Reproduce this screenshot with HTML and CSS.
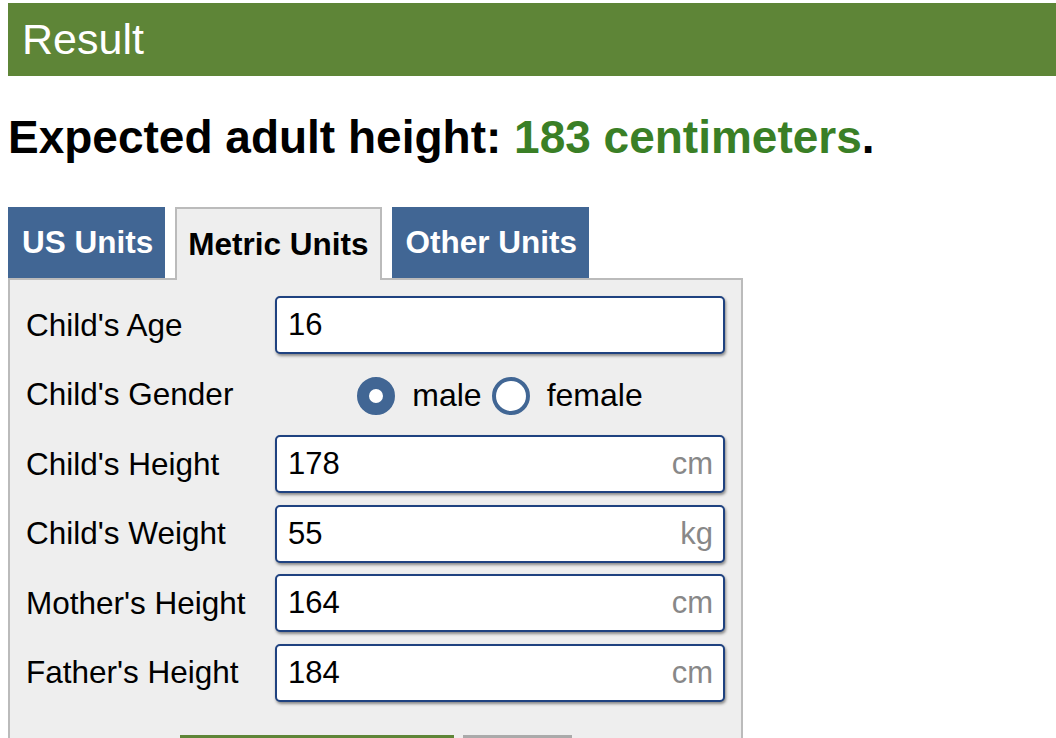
FILE: index.html
```html
<!DOCTYPE html>
<html>
  <head>
    <title>Height Calculator</title>
    <link rel="stylesheet" href="styles.css">
  </head>
  <body>
    <h2 class="result-bar">Result</h2>

    <p class="answer">
      Expected adult height: <span class="answer-value">183 centimeters</span>.
    </p>

    <div class="tabs">
      <a class="tab">US Units</a>
      <a class="tab tab-active">Metric Units</a>
      <a class="tab">Other Units</a>
    </div>

    <div class="panel">
      <form class="calc-form">
        <label class="row-label" for="age">Child's Age</label>
        <div class="field">
          <input type="text" id="age" value="16" />
        </div>

        <span class="row-label">Child's Gender</span>
        <div class="gender">
          <span class="radio radio-checked"></span>
          <span class="radio-text">male</span>
          <span class="radio"></span>
          <span class="radio-text">female</span>
        </div>

        <label class="row-label" for="height">Child's Height</label>
        <div class="field">
          <input type="text" id="height" value="178" />
          <span class="unit">cm</span>
        </div>

        <label class="row-label" for="weight">Child's Weight</label>
        <div class="field">
          <input type="text" id="weight" value="55" />
          <span class="unit">kg</span>
        </div>

        <label class="row-label" for="mheight">Mother's Height</label>
        <div class="field">
          <input type="text" id="mheight" value="164" />
          <span class="unit">cm</span>
        </div>

        <label class="row-label" for="fheight">Father's Height</label>
        <div class="field">
          <input type="text" id="fheight" value="184" />
          <span class="unit">cm</span>
        </div>
      </form>

      <div class="buttons">
        <button type="button" class="btn-calc">Calculate</button>
        <button type="button" class="btn-clear">Clear</button>
      </div>
    </div>
  </body>
</html>
```

FILE: styles.css
```css
body {
  font-family: "Liberation Sans", Arial, sans-serif;
  margin: 0;
  padding: 3px 0 0 8px;
  color: #000;
  background: #fff;
  overflow: hidden;
}

.result-bar {
  margin: 0;
  height: 73px;
  padding-left: 14px;
  background-color: #5e8537;
  color: #fff;
  font-size: 43px;
  font-weight: normal;
  line-height: 73px;
}

.answer {
  margin: 33px 0 42px 0;
  font-size: 46px;
  font-weight: bold;
  line-height: 56px;
}

.answer-value {
  color: #3a7f26;
}

.tabs {
  display: flex;
  gap: 10px;
  align-items: flex-end;
  width: 735px;
  position: relative;
  z-index: 1;
}

.tab {
  height: 71px;
  padding: 0 12px 0 14px;
  background-color: #416694;
  color: #fff;
  font-size: 31.5px;
  font-weight: bold;
  line-height: 71px;
  box-sizing: border-box;
}

.tab-active {
  height: 73px;
  margin-bottom: -2px;
  padding: 0 11px;
  background-color: #eee;
  color: #000;
  border: 2px solid #bbb;
  border-bottom: none;
  line-height: 71px;
}

.panel {
  width: 735px;
  box-sizing: border-box;
  background-color: #eee;
  border: 2px solid #bbb;
  padding: 16px 16px 40px 16px;
}

.calc-form {
  display: grid;
  grid-template-columns: 249px 450px;
  grid-auto-rows: 58px;
  row-gap: 11.5px;
  align-items: center;
}

.row-label {
  font-size: 31.5px;
}

.field {
  position: relative;
  height: 58px;
}

.field input {
  width: 100%;
  height: 58px;
  box-sizing: border-box;
  padding: 0 11px;
  border: 2px solid #1f4280;
  border-radius: 5px;
  box-shadow: 1px 2px 3px #888;
  font-family: "Liberation Sans", Arial, sans-serif;
  font-size: 31px;
  color: #000;
  background: #fff;
}

.unit {
  position: absolute;
  right: 12px;
  top: 0;
  line-height: 58px;
  font-size: 31px;
  color: #888;
}

.gender {
  display: flex;
  align-items: center;
  justify-content: center;
  font-size: 32px;
  padding-top: 2px;
}

.radio {
  width: 38px;
  height: 38px;
  box-sizing: border-box;
  border-radius: 50%;
  border: 4px solid #416694;
  background: #fff;
  margin-right: 17px;
}

.radio-checked {
  border: 12px solid #416694;
}

.radio-text {
  margin-right: 10px;
}

.radio-text:last-child {
  margin-right: 0;
}

.buttons {
  display: flex;
  justify-content: center;
  gap: 9px;
  margin-top: 33px;
}

.buttons button {
  height: 62px;
  border: none;
  color: #fff;
  font-family: "Liberation Sans", Arial, sans-serif;
  font-size: 31px;
  font-weight: bold;
}

.btn-calc {
  width: 274px;
  background-color: #5e8537;
}

.btn-clear {
  width: 109px;
  background-color: #aaa;
}
```
